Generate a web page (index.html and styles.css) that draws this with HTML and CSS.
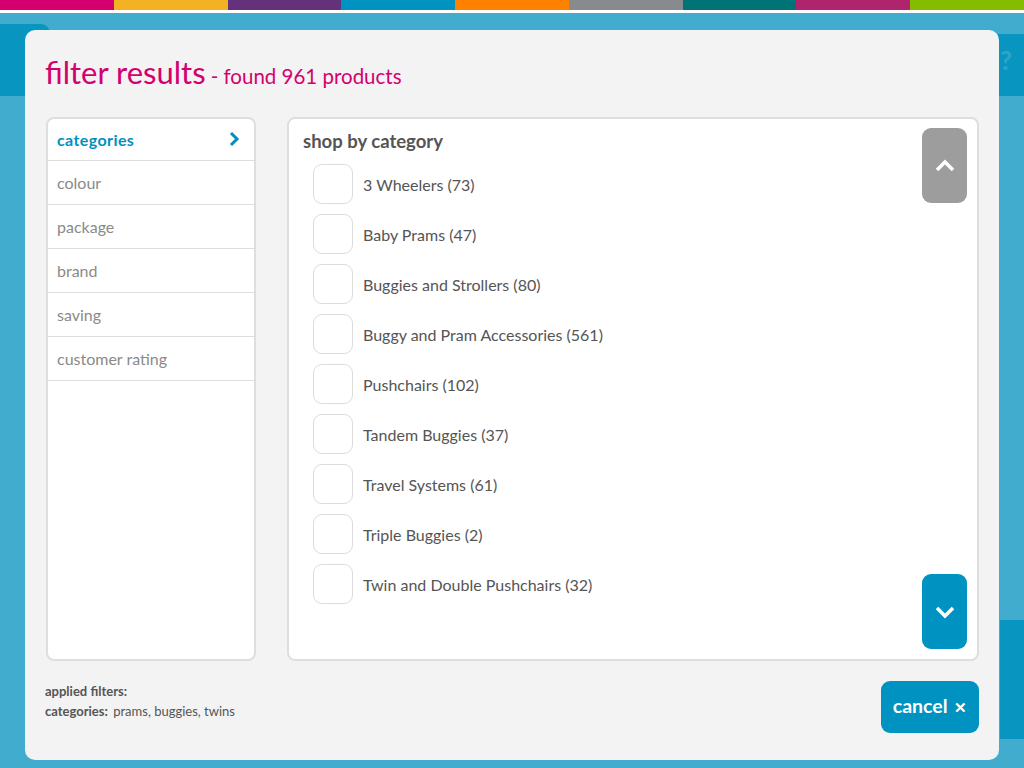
FILE: index.html
```html
<!DOCTYPE html>
<html lang="en">
<head>
<meta charset="utf-8">
<title>filter results</title>
<link rel="stylesheet" href="styles.css">
</head>
<body>
<div class="stripe">
  <span class="s1"></span><span class="s2"></span><span class="s3"></span><span class="s4"></span><span class="s5"></span><span class="s6"></span><span class="s7"></span><span class="s8"></span><span class="s9"></span>
</div>
<div class="page">
  <div class="tab-left"></div>
  <div class="side-right">
    <div class="tab-help">?</div>
    <div class="tab-next"></div>
  </div>
</div>

<div class="modal">
  <div class="modal-head">
    <h1 class="title">filter results</h1>
    <span class="found">- found 961 products</span>
  </div>
  <div class="panels">
    <ul class="menu">
      <li class="menu-item active">categories
        <svg class="menu-chev" width="12" height="16" viewBox="0 0 12 16"><polyline points="3,2 9,8 3,14" fill="none" stroke="#0090be" stroke-width="3"/></svg>
      </li>
      <li class="menu-item">colour</li>
      <li class="menu-item">package</li>
      <li class="menu-item">brand</li>
      <li class="menu-item">saving</li>
      <li class="menu-item">customer rating</li>
    </ul>
    <div class="options">
      <div class="list">
        <h2 class="list-title">shop by category</h2>
        <ul class="checks">
          <li class="check"><span class="box"></span>3 Wheelers (73)</li>
          <li class="check"><span class="box"></span>Baby Prams (47)</li>
          <li class="check"><span class="box"></span>Buggies and Strollers (80)</li>
          <li class="check"><span class="box"></span>Buggy and Pram Accessories (561)</li>
          <li class="check"><span class="box"></span>Pushchairs (102)</li>
          <li class="check"><span class="box"></span>Tandem Buggies (37)</li>
          <li class="check"><span class="box"></span>Travel Systems (61)</li>
          <li class="check"><span class="box"></span>Triple Buggies (2)</li>
          <li class="check"><span class="box"></span>Twin and Double Pushchairs (32)</li>
        </ul>
      </div>
      <div class="scroller">
        <button class="scroll up"><svg width="22" height="14" viewBox="0 0 22 14"><polyline points="3,11 11,3 19,11" fill="none" stroke="#fff" stroke-width="3.5"/></svg></button>
        <button class="scroll down"><svg width="22" height="14" viewBox="0 0 22 14"><polyline points="3,3 11,11 19,3" fill="none" stroke="#fff" stroke-width="3.5"/></svg></button>
      </div>
    </div>
  </div>
  <div class="modal-foot">
    <div class="applied">
      <div class="applied-label">applied filters:</div>
      <div class="applied-row"><b>categories:</b> prams, buggies, twins</div>
    </div>
    <button class="cancel">cancel <span class="x">&#x2715;</span></button>
  </div>
</div>
</body>
</html>
```
FILE: styles.css
```css
* { box-sizing: border-box; }
html, body { margin: 0; padding: 0; }
body {
  width: 1024px;
  height: 768px;
  overflow: hidden;
  background: #42acce;
  font-family: Lato, "Open Sans", sans-serif;
  position: relative;
}
.stripe {
  display: flex;
  height: 13px;
  border-bottom: 3px solid #fff;
}
.stripe span { flex: 1; height: 10px; }
.s1 { background: #d4006f; }
.s2 { background: #f2b224; }
.s3 { background: #64317b; }
.s4 { background: #0093c1; }
.s5 { background: #ff8100; }
.s6 { background: #878b8d; }
.s7 { background: #007377; }
.s8 { background: #b0246e; }
.s9 { background: #84bc00; }

.page {
  display: flex;
  justify-content: space-between;
}
.tab-left {
  margin-top: 11px;
  width: 50px;
  height: 72px;
  background: #0896c0;
  border-top-right-radius: 9px;
}
.side-right {
  display: flex;
  flex-direction: column;
  align-items: flex-end;
}
.tab-help {
  margin-top: 21px;
  width: 26px;
  height: 62px;
  background: #0896c0;
  color: #2ea4cb;
  font-weight: 700;
  font-size: 26px;
  padding: 10px 0 0 2px;
}
.tab-next {
  margin-top: 524px;
  width: 24px;
  height: 119px;
  background: #0896c0;
}

.modal {
  position: absolute;
  top: 30px;
  left: 25px;
  width: 974px;
  height: 730px;
  background: #f3f3f3;
  border-radius: 10px;
  padding: 0 20px 0 21px;
  display: flex;
  flex-direction: column;
}
.modal-head {
  height: 87px;
  display: flex;
  align-items: baseline;
  padding-top: 24px;
  margin-left: -1px;
}
.title {
  margin: 0;
  font-weight: 400;
  font-size: 31px;
  line-height: 36px;
  color: #d4006f;
}
.found {
  margin-left: 5px;
  font-size: 20.5px;
  color: #d4006f;
}

.panels {
  display: flex;
  gap: 31px;
  height: 544px;
}
.menu {
  list-style: none;
  margin: 0;
  padding: 0;
  width: 210px;
  background: #fff;
  border: 2px solid #dedede;
  border-radius: 8px;
}
.menu-item {
  height: 44px;
  border-bottom: 1px solid #dedede;
  display: flex;
  align-items: center;
  justify-content: space-between;
  padding: 0 14px 1px 9px;
  font-size: 16px;
  color: #8a8a8a;
}
.menu-item:first-child { height: 42px; }
.menu-item.active {
  color: #0090be;
  font-weight: 700;
  font-size: 16px;
  letter-spacing: 0.4px;
}
.options {
  flex: 1;
  display: flex;
  background: #fff;
  border: 2px solid #dedede;
  border-radius: 8px;
}
.list {
  flex: 1;
  padding: 10px 0 0 14px;
}
.list-title {
  margin: 0 0 11px;
  font-size: 18.5px;
  line-height: 24px;
  font-weight: 700;
  color: #555;
}
.checks {
  list-style: none;
  margin: 0;
  padding: 0 0 0 10px;
}
.check {
  display: flex;
  align-items: center;
  height: 50px;
  padding-bottom: 10px;
  font-size: 16px;
  color: #555;
}
.box {
  width: 40px;
  height: 40px;
  border: 1px solid #dcdcdc;
  border-radius: 9px;
  background: #fff;
  margin-right: 10px;
}
.scroller {
  display: flex;
  flex-direction: column;
  justify-content: space-between;
  padding: 9px 10px 10px 0;
}
.scroll {
  width: 45px;
  height: 75px;
  border: 0;
  border-radius: 9px;
  display: flex;
  align-items: center;
  justify-content: center;
  padding: 0;
}
.scroll.up { background: #9d9d9d; }
.scroll.down { background: #0093c1; }

.modal-foot {
  flex: 1;
  display: flex;
  justify-content: space-between;
  align-items: flex-start;
  padding-top: 20px;
}
.applied {
  margin-left: -1px;
  padding-top: 0;
  font-size: 13px;
  line-height: 20px;
  color: #555;
}
.applied-label { font-weight: 700; }
.applied-row b { margin-right: 2px; }
.cancel {
  width: 98px;
  height: 52px;
  border: 0;
  border-radius: 9px;
  background: #0093c1;
  color: #fff;
  font-family: Lato, "Open Sans", sans-serif;
  font-weight: 700;
  font-size: 19.5px;
  padding: 0 0 3px;
}
.cancel .x { font-size: 15px; margin-left: 2px; }
```
